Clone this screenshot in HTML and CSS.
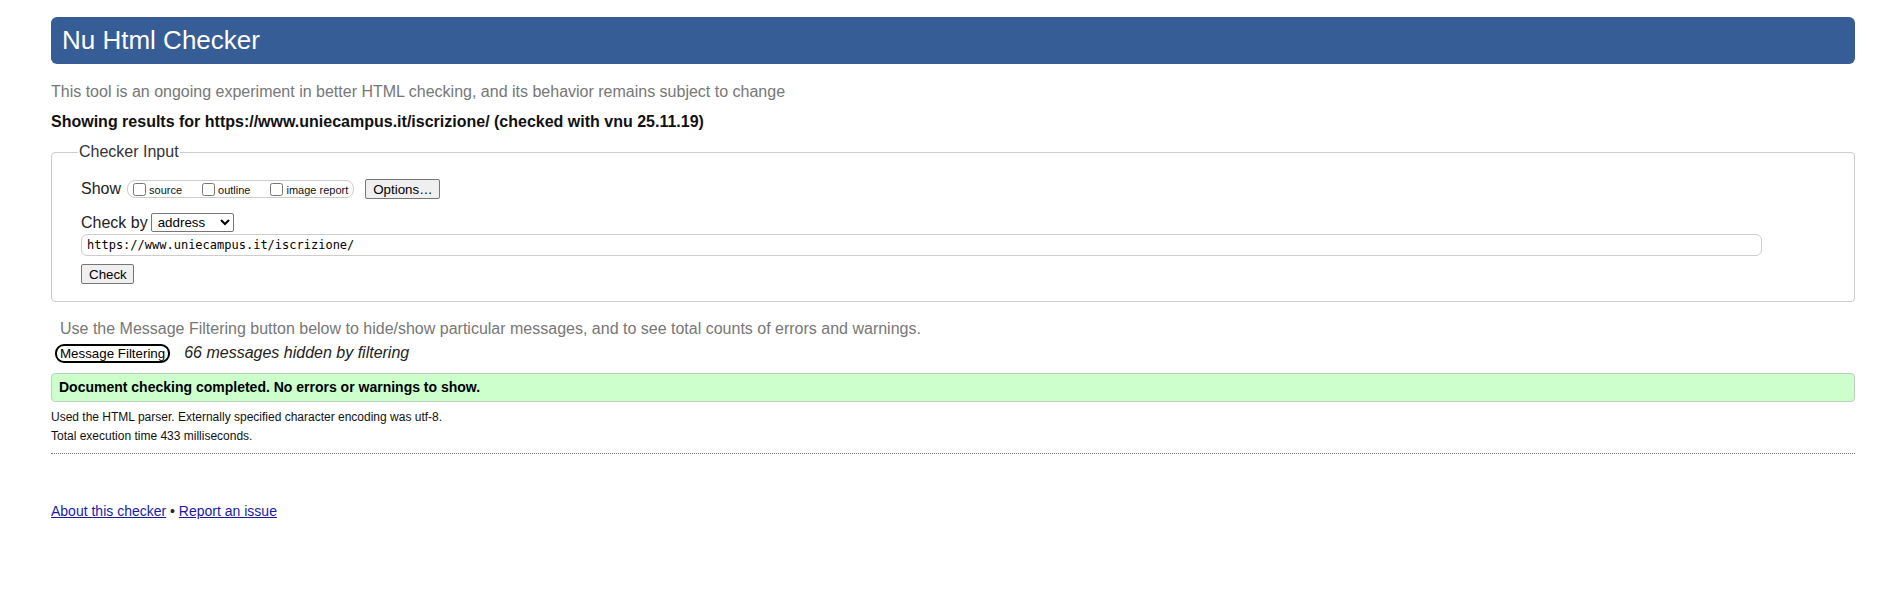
FILE: index.html
```html
<!DOCTYPE html>
<html lang="en">
<head>
<meta charset="utf-8">
<title>Nu Html Checker</title>
<link rel="stylesheet" href="styles.css">
</head>
<body>
<h1 class="title">Nu Html Checker</h1>
<p class="intro">This tool is an ongoing experiment in better HTML checking, and its behavior remains subject to change</p>
<p class="showing">Showing results for https://www.uniecampus.it/iscrizione/ (checked with vnu 25.11.19)</p>
<fieldset class="checker">
  <legend class="checker-legend">Checker Input</legend>
  <div class="show-row">
    <span class="row-label">Show</span>
    <span class="opts">
      <label class="opt"><input type="checkbox" class="cb"><span class="opt-text">source</span></label>
      <label class="opt"><input type="checkbox" class="cb"><span class="opt-text">outline</span></label>
      <label class="opt last"><input type="checkbox" class="cb"><span class="opt-text">image report</span></label>
    </span>
    <button class="btn options-btn" type="button">Options…</button>
  </div>
  <div class="checkby-row">
    <span class="row-label">Check by</span>
    <select class="sel"><option>address</option></select>
  </div>
  <input class="url" type="text" value="https://www.uniecampus.it/iscrizione/">
  <div class="check-row"><button class="btn check-btn" type="button">Check</button></div>
</fieldset>
<p class="filter-info">Use the Message Filtering button below to hide/show particular messages, and to see total counts of errors and warnings.</p>
<div class="filter-row">
  <button class="filter-btn" type="button">Message Filtering</button>
  <em class="hidden-count">66 messages hidden by filtering</em>
</div>
<div class="success">Document checking completed. No errors or warnings to show.</div>
<p class="detail">Used the HTML parser. Externally specified character encoding was utf-8.</p>
<p class="detail">Total execution time 433 milliseconds.</p>
<div class="sep"></div>
<p class="footer"><a href="#" class="flink">About this checker</a> • <a href="#" class="flink">Report an issue</a></p>
</body>
</html>
```
FILE: styles.css
```css
html, body {
  margin: 0;
  background: #fff;
}
body {
  padding: 0 45px 0 51px;
  font-family: "Liberation Sans", Arial, sans-serif;
  font-size: 16px;
  color: #000;
}
.title {
  margin: 17px 0 0;
  padding: 8px 11px;
  height: 31px;
  line-height: 31px;
  font-size: 26px;
  font-weight: normal;
  color: #fff;
  background: #365d95;
  border-radius: 6px;
}
.intro {
  margin: 16px 0 0;
  line-height: 24px;
  color: #777;
}
.showing {
  margin: 6px 0 0;
  line-height: 24px;
  font-weight: bold;
  color: #111;
}
.checker {
  margin: 9px 0 0;
  padding: 17px 20px 17px 29px;
  border: 1px solid #ccc;
  border-radius: 4px;
  min-inline-size: 0;
}
.checker-legend {
  font-size: 16px;
  line-height: 18px;
  padding: 0 1px;
  margin-left: -3px;
  color: #333;
}
.show-row {
  display: flex;
  align-items: center;
  height: 22px;
}
.row-label {
  font-size: 16px;
  color: #222;
}
.opts {
  display: inline-flex;
  align-items: center;
  height: 16px;
  margin-left: 6px;
  padding: 0 5px;
  border: 1px solid #ccc;
  border-radius: 8px;
}
.opt {
  display: inline-flex;
  align-items: center;
  font-size: 11px;
  margin-right: 20px;
  color: #111;
}
.opt.last {
  margin-right: 0;
}
.opt-text {
  position: relative;
  top: 1px;
}
.cb {
  width: 13px;
  height: 13px;
  margin: 0 3px 0 0;
}
.btn {
  font-family: "Liberation Sans", Arial, sans-serif;
  font-size: 13.33px;
  height: 20px;
  padding: 0 7px;
  background: #efefef;
  border: 1px solid #767676;
  border-radius: 2px;
  color: #000;
}
.options-btn {
  margin-left: 11px;
  width: 75px;
}
.checkby-row {
  display: flex;
  align-items: center;
  height: 19px;
  margin-top: 13px;
}
.sel {
  margin-left: 3px;
  width: 83px;
  height: 19px;
  font-family: "Liberation Sans", Arial, sans-serif;
  font-size: 13.33px;
  border: 1px solid #767676;
  border-radius: 2px;
  background: #fff;
  padding: 0 0 0 2px;
}
.url {
  display: block;
  box-sizing: border-box;
  margin-top: 2px;
  width: calc(100% - 72px);
  height: 22px;
  padding: 0 5px;
  font-family: "DejaVu Sans Mono", "Liberation Mono", monospace;
  font-size: 12px;
  color: #000;
  border: 1px solid #ccc;
  border-radius: 6px;
}
.check-row {
  display: flex;
  margin-top: 8px;
}
.check-btn {
  width: 53px;
}
.filter-info {
  margin: 15px 0 0;
  padding-left: 9px;
  line-height: 24px;
  color: #777;
}
.filter-row {
  display: flex;
  align-items: center;
  height: 24px;
}
.filter-btn {
  margin-left: 4px;
  height: 19px;
  padding: 0 3px;
  font-family: "Liberation Sans", Arial, sans-serif;
  font-size: 13.33px;
  line-height: 15px;
  background: #fff;
  color: #000;
  border: 2px solid #000;
  border-radius: 9px;
}
.hidden-count {
  margin-left: 14px;
  font-size: 16px;
  color: #222;
}
.success {
  margin-top: 8px;
  padding: 5px 7px;
  line-height: 17px;
  font-size: 14px;
  font-weight: bold;
  background: #ccffcc;
  border: 1px solid #bcd0bc;
  border-radius: 4px;
}
.success + .detail {
  margin-top: 6px;
}
.detail {
  margin: 0;
  font-size: 12px;
  line-height: 19px;
  color: #111;
}
.sep {
  margin-top: 7px;
  border-top: 1px dotted #777;
}
.footer {
  margin: 48px 0 0;
  font-size: 14px;
  line-height: 18px;
  color: #222;
}
.flink {
  color: #1a1aa6;
}
```
